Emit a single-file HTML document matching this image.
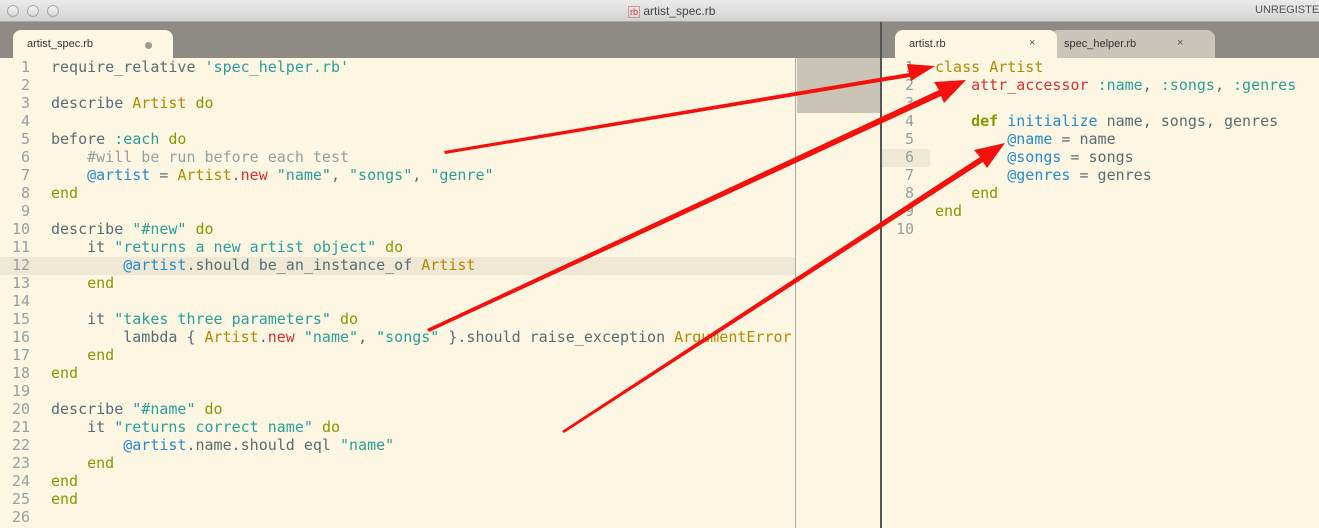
<!DOCTYPE html>
<html><head><meta charset="utf-8"><style>
*{margin:0;padding:0;box-sizing:border-box}
body{width:1319px;height:528px;overflow:hidden;background:#fdf6e3;position:relative;font-family:"DejaVu Sans Mono","Liberation Mono",monospace}
.title{position:absolute;left:0;top:0;width:1319px;height:22px;background:linear-gradient(#ebebeb,#d3d3d3);border-bottom:1px solid #a8a8a8;font:12px "Liberation Sans",sans-serif;color:#444}
.dot{position:absolute;top:5px;width:12px;height:12px;border-radius:50%;border:1px solid #a9a9a9;background:linear-gradient(#f4f4f4,#d6d6d6)}
.tabbar{position:absolute;top:22px;height:36px;background:#8e8b84}
.tab{position:absolute;top:30px;height:28px;background:#fdf6e3;border-radius:8px 8px 0 0;font:11px "Liberation Sans",sans-serif;color:#333;padding:8px 0 0 14px}
.tab.in{background:#c9c5bb}
pre{position:absolute;font-size:15px;line-height:18px;font-family:"DejaVu Sans Mono",monospace;color:#586e75}
.ln{color:#93a1a1;text-align:right}
.s{color:#2aa198}.c{color:#b58900}.k{color:#859900}.v{color:#268bd2}.r{color:#dc322f}.cm{color:#93a1a1}.f{color:#268bd2}
</style></head><body>
<div class="title">
<div class="dot" style="left:7px"></div><div class="dot" style="left:27px"></div><div class="dot" style="left:47px"></div>
<div style="position:absolute;left:628px;top:4px"><span style="color:#c33;font-size:9px;border:1px solid #c99;padding:0 1px">rb</span> artist_spec.rb</div>
<div style="position:absolute;left:1255px;top:4px;font-size:11px;color:#555">UNREGISTERED</div>
</div>
<div class="tabbar" style="left:0;width:880px"></div>
<div class="tabbar" style="left:882px;width:437px"></div>
<div style="position:absolute;left:880px;top:22px;width:2px;height:506px;background:#555"></div>
<div class="tab" style="left:13px;width:160px">artist_spec.rb<span style="position:absolute;left:132px;top:12px;width:7px;height:7px;border-radius:50%;background:#999"></span></div>
<div class="tab in" style="left:1050px;width:165px">spec_helper.rb<span style="position:absolute;left:127px;top:7px;color:#555">×</span></div>
<div class="tab" style="left:895px;width:162px">artist.rb<span style="position:absolute;left:134px;top:7px;color:#555">×</span></div>
<div style="position:absolute;left:0;top:257px;width:795px;height:18px;background:#eee8d5"></div>
<div style="position:absolute;left:882px;top:149px;width:48px;height:18px;background:#eee8d5"></div>
<div style="position:absolute;left:797px;top:58px;width:83px;height:55px;background:#c9c4b5"></div>
<div style="position:absolute;left:795px;top:58px;width:1px;height:470px;background:#aaa"></div>
<pre class="ln" style="left:0;top:58px;width:30px">1
2
3
4
5
6
7
8
9
10
11
12
13
14
15
16
17
18
19
20
21
22
23
24
25
26</pre>
<pre style="left:51px;top:58px">require_relative <span class="s">'spec_helper.rb'</span>

describe <span class="c">Artist</span> <span class="k">do</span>

before <span class="s">:each</span> <span class="k">do</span>
    <span class="cm">#will be run before each test</span>
    <span class="v">@artist</span> = <span class="c">Artist</span>.<span class="r">new</span> <span class="s">"name"</span>, <span class="s">"songs"</span>, <span class="s">"genre"</span>
<span class="k">end</span>

describe <span class="s">"#new"</span> <span class="k">do</span>
    it <span class="s">"returns a new artist object"</span> <span class="k">do</span>
        <span class="v">@artist</span>.should be_an_instance_of <span class="c">Artist</span>
    <span class="k">end</span>

    it <span class="s">"takes three parameters"</span> <span class="k">do</span>
        lambda { <span class="c">Artist</span>.<span class="r">new</span> <span class="s">"name"</span>, <span class="s">"songs"</span> }.should raise_exception <span class="c">ArgumentError</span>
    <span class="k">end</span>
<span class="k">end</span>

describe <span class="s">"#name"</span> <span class="k">do</span>
    it <span class="s">"returns correct name"</span> <span class="k">do</span>
        <span class="v">@artist</span>.name.should eql <span class="s">"name"</span>
    <span class="k">end</span>
<span class="k">end</span>
<span class="k">end</span>
</pre>
<pre class="ln" style="left:882px;top:58px;width:32px">1
2
3
4
5
6
7
8
9
10</pre>
<pre style="left:935px;top:58px"><span class="c">class</span> <span class="c">Artist</span>
    <span class="r">attr_accessor</span> <span class="s">:name</span>, <span class="s">:songs</span>, <span class="s">:genres</span>

    <span class="k" style="font-weight:bold">def</span> <span class="f">initialize</span> name, songs, genres
        <span class="v">@name</span> = name
        <span class="v">@songs</span> = songs
        <span class="v">@genres</span> = genres
    <span class="k">end</span>
<span class="k">end</span>
</pre>
<svg style="position:absolute;left:0;top:0" width="1319" height="528">
<g fill="#f4100c">
<!-- arrow1: 444,152 -> 935,66 -->
<polygon points="444,151 909,73 907,64 935,66 911,81 910,77 445,154"/>
<!-- arrow2: 428,330 -> 966,80 -->
<polygon points="427,329 939,90 934,82 966,80 944,103 941,96 429,332"/>
<!-- arrow3: 563,432 -> 1005,143 -->
<polygon points="562,431 980,157 974,150 1005,143 987,168 983,162 564,433"/>
</g></svg>
</body></html>
